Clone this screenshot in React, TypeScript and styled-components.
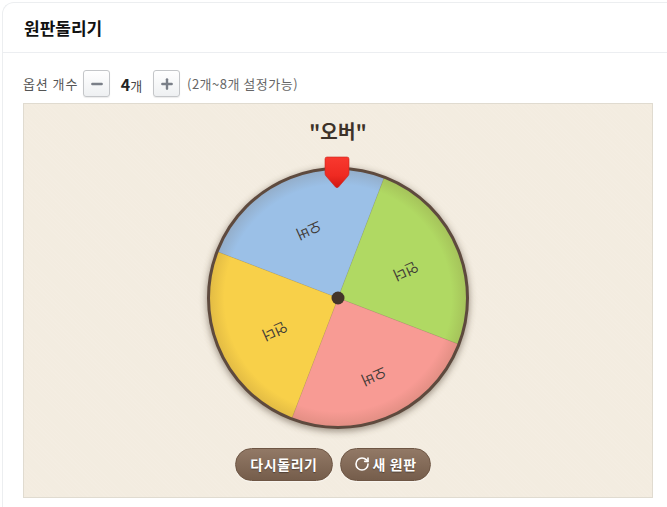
import styled, { createGlobalStyle } from "styled-components";
import { Minus, Plus, RotateCw } from "lucide-react";

const GlobalStyle = createGlobalStyle`
  html, body {
    margin: 0;
    padding: 0;
    background: #fff;
    overflow: hidden;
  }
  body {
    font-family: "Noto Sans CJK KR", "Noto Sans", sans-serif;
  }
`;

const slices = [
  { color: "#9bc0e7", from: -69, label: "오버", x: -29, y: -67 },
  { color: "#b0d963", from: 21, label: "언더", x: 68, y: -26 },
  { color: "#f89b94", from: 111, label: "오버", x: 36, y: 79 },
  { color: "#f8d049", from: 201, label: "언더", x: -63, y: 34 },
];

const CENTER = 150;
const RADIUS = 129;

const point = (deg: number) => {
  const rad = (deg * Math.PI) / 180;
  return `${CENTER + RADIUS * Math.sin(rad)} ${CENTER - RADIUS * Math.cos(rad)}`;
};

const slicePath = (from: number) =>
  `M${CENTER} ${CENTER} L${point(from)} A${RADIUS} ${RADIUS} 0 0 1 ${point(from + 90)} Z`;

const App = () => {
  return (
    <Card>
      <GlobalStyle />
      <Header>원판돌리기</Header>
      <Body>
        <Options>
          <OptionLabel>옵션 개수</OptionLabel>
          <StepButton>
            <Minus size={16} strokeWidth={3.6} />
          </StepButton>
          <Count>
            <strong>4</strong>개
          </Count>
          <StepButton>
            <Plus size={16} strokeWidth={3.6} />
          </StepButton>
          <Hint>(2개~8개 설정가능)</Hint>
        </Options>
        <Panel>
          <Result>"오버"</Result>
          <WheelBox>
            <svg width="300" height="300" viewBox="0 0 300 300">
              <defs>
                <radialGradient id="edge">
                  <stop offset="0.88" stopColor="#6b4a2a" stopOpacity="0" />
                  <stop offset="1" stopColor="#6b4a2a" stopOpacity="0.16" />
                </radialGradient>
                <filter id="glow" x="-20%" y="-20%" width="140%" height="140%">
                  <feGaussianBlur stdDeviation="3.5" />
                </filter>
              </defs>
              <circle cx="150" cy="152" r="131.5" fill="#4a3a2c" opacity="0.5" filter="url(#glow)" />
              {slices.map((s) => (
                <path key={s.from} d={slicePath(s.from)} fill={s.color} stroke="#000" strokeOpacity="0.05" strokeWidth="1" />
              ))}
              <circle cx="150" cy="150" r="129" fill="url(#edge)" />
              <circle cx="150" cy="150" r="129.5" fill="none" stroke="#5e4a3e" strokeWidth="3" />
              {slices.map((s) => (
                <SliceLabel
                  key={s.from}
                  textAnchor="middle"
                  dominantBaseline="central"
                  transform={`translate(${CENTER + s.x} ${CENTER + s.y}) rotate(156)`}
                >
                  {s.label}
                </SliceLabel>
              ))}
              <circle cx="150" cy="150" r="6.5" fill="#43352a" />
            </svg>
            <Pointer width="26" height="33" viewBox="0 0 26 33">
              <defs>
                <linearGradient id="pin" x1="0" y1="0" x2="0" y2="1">
                  <stop offset="0" stopColor="#f8392f" />
                  <stop offset="0.6" stopColor="#ef2a22" />
                  <stop offset="1" stopColor="#d01812" />
                </linearGradient>
              </defs>
              <path
                d="M3 1 H23 Q25 1 25 3 V17 Q25 19 24 20 L14.5 31 Q13 32.4 11.5 31 L2 20 Q1 19 1 17 V3 Q1 1 3 1 Z"
                fill="url(#pin)"
                stroke="#c9261d"
                strokeWidth="0.6"
              />
            </Pointer>
          </WheelBox>
          <Actions>
            <ActionButton $pad={14}>다시돌리기</ActionButton>
            <ActionButton $pad={13}>
              <RotateCw size={16} strokeWidth={2.4} />새 원판
            </ActionButton>
          </Actions>
        </Panel>
      </Body>
    </Card>
  );
};

const Card = styled.div`
  box-sizing: border-box;
  width: calc(100vw - 2px);
  height: 505px;
  margin: 2px 0 0 2px;
  border: 1px solid #eceef0;
  border-right: none;
  border-bottom: none;
  border-radius: 12px 0 0 0;
  background: #fff;
`;

const Header = styled.div`
  box-sizing: border-box;
  height: 50px;
  padding: 0 21px;
  display: flex;
  align-items: center;
  border-bottom: 1px solid #eceef1;
  font-size: 17px;
  font-weight: 700;
  color: #111;
`;

const Body = styled.div`
  padding: 17px 0 0 20px;
`;

const Options = styled.div`
  height: 27px;
  display: flex;
  align-items: center;
  font-size: 13px;
  letter-spacing: 0.5px;
  color: #555;
`;

const OptionLabel = styled.span`
  width: 60px;
  letter-spacing: 0.9px;
  white-space: nowrap;
`;

const StepButton = styled.button`
  box-sizing: border-box;
  width: 27px;
  height: 27px;
  padding: 0;
  display: flex;
  align-items: center;
  justify-content: center;
  border: 1px solid #c4c6c9;
  border-radius: 3px;
  background: linear-gradient(#fff, #eef0f2);
  color: #7a7f88;
  box-shadow: 0 1px 1px rgba(0, 0, 0, 0.08);
`;

const Count = styled.span`
  width: 43px;
  text-align: center;
  font-size: 13px;
  letter-spacing: 0;
  color: #444;

  strong {
    font-size: 16px;
    color: #222;
  }
`;

const Hint = styled.span`
  margin-left: 7px;
  font-size: 13px;
  color: #666;
`;

const Panel = styled.div`
  box-sizing: border-box;
  width: 630px;
  height: 395px;
  margin-top: 6px;
  padding-top: 13px;
  display: flex;
  flex-direction: column;
  align-items: center;
  border: 1px solid #e0dbd0;
  background-color: #f3ece0;
  background-image: repeating-linear-gradient(45deg, rgba(255, 255, 255, 0.05) 0 1px, transparent 1px 3px);
`;

const Result = styled.div`
  height: 28px;
  line-height: 28px;
  font-size: 19px;
  font-weight: 700;
  letter-spacing: 0.2px;
  color: #3d3229;
`;

const WheelBox = styled.div`
  position: relative;
  width: 300px;
  height: 300px;
  margin-top: 3px;

  svg {
    display: block;
  }
`;

const Pointer = styled.svg`
  position: absolute;
  top: 8px;
  left: 136px;
`;

const SliceLabel = styled.text`
  font-size: 14px;
  fill: #3f3a36;
`;

const Actions = styled.div`
  display: flex;
  gap: 7px;
  margin-top: 0;
  margin-right: 10px;
`;

const ActionButton = styled.button<{ $pad: number }>`
  box-sizing: border-box;
  height: 33px;
  padding: 0 ${(props) => props.$pad}px 2px;
  display: flex;
  align-items: center;
  gap: 3px;
  border: 1px solid #6e5644;
  border-radius: 17px;
  background: linear-gradient(#927966, #755d4b);
  color: #fff;
  font-family: inherit;
  font-size: 14px;
  font-weight: 700;
  letter-spacing: 0.6px;
  text-shadow: 0 1px 1px rgba(0, 0, 0, 0.35);
  box-shadow: 0 1px 1px rgba(255, 255, 255, 0.5);
`;

export default App;
